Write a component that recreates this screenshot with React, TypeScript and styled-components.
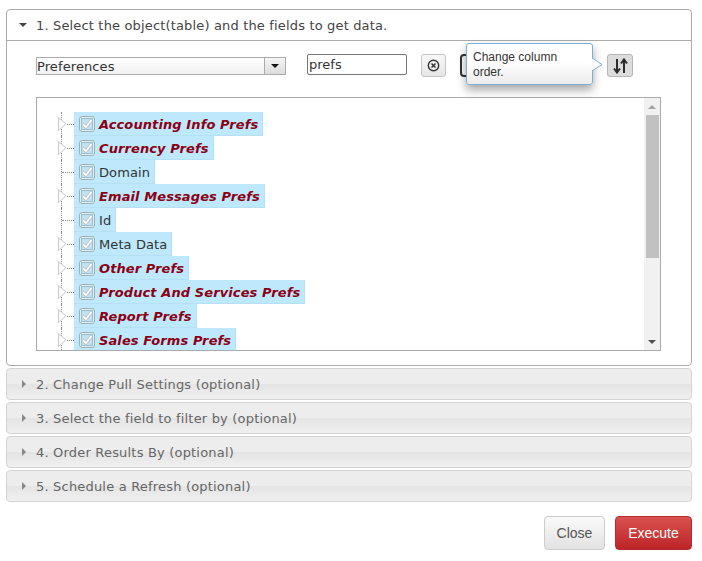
import styled, { createGlobalStyle } from 'styled-components';

const Global = createGlobalStyle`
  html, body { margin: 0; padding: 0; background: #fff; }
  body { font-family: "DejaVu Sans", Verdana, sans-serif; font-size: 13px; color: #333; }
  * { box-sizing: border-box; }
`;

const Page = styled.div`width: 702px; height: 561px; padding: 9px 10px 0 6px; display: flex; flex-direction: column; overflow: hidden;`;
const OpenPanel = styled.section`height: 357px; border: 1px solid #ababab; border-radius: 4px; display: flex; flex-direction: column;`;
const OpenHeader = styled.div`
  height: 31px; flex: none; border-bottom: 1px solid #ababab; display: flex; align-items: center;
  padding-left: 12px; gap: 9px; color: #444; font-size: 13px; letter-spacing: 0.16px;
`;
const Arrow = styled.span<{ $open?: boolean }>`
  width: 0; height: 0; flex: none;
  ${p => p.$open
    ? 'border-left: 4px solid transparent; border-right: 4px solid transparent; border-top: 4px solid #444;'
    : 'border-top: 4px solid transparent; border-bottom: 4px solid transparent; border-left: 4px solid #888; margin: 0 2px;'}
`;
const Body = styled.div`flex: 1; padding: 13px 30px 0 29px; min-height: 0;`;
const Toolbar = styled.div`position: relative; display: flex; align-items: flex-start; height: 43px;`;
const SelectBox = styled.div`
  margin-top: 3px; width: 250px; height: 18px; border: 1px solid #ababab; display: flex;
  background: linear-gradient(#fff, #f1f1f1); color: #333;
`;
const SelectText = styled.div`flex: 1; font-size: 13px; line-height: 17px; letter-spacing: 0.1px;`;
const SelectBtn = styled.div`
  width: 21px; border-left: 1px solid #ababab; background: linear-gradient(#f4f4f4, #dcdcdc);
  display: flex; align-items: center; justify-content: center;
`;
const BlackArrow = styled.span`width: 0; height: 0; border-left: 4px solid transparent; border-right: 4px solid transparent; border-top: 4px solid #111;`;
const FilterInput = styled.input`
  margin-left: 21px; width: 100px; height: 21px; border: 1px solid #767676; border-radius: 2px; padding: 0 0 0 1px;
  font: 13px "DejaVu Sans", sans-serif; color: #333; background: #fff; outline: none;
`;
const IconBtn = styled.button<{ $left: number; $wide: number; $pressed?: boolean }>`
  margin-left: ${p => p.$left}px; width: ${p => p.$wide}px; height: 23px; padding: 0; border: 1px solid ${p => (p.$pressed ? '#b5b5b5' : '#c4c4c4')}; border-radius: 3px;
  background: ${p => (p.$pressed ? '#dcdcdc' : 'linear-gradient(#f8f8f8, #e6e6e6)')};
  display: flex; align-items: center; justify-content: center; color: #333; flex: none;
`;
const HiddenBtn = styled.div`margin-left: 14px; width: 26px; height: 23px; border: 2px solid #333; border-radius: 4px; background: #fafafa; flex: none;`;
const Tip = styled.div`
  position: absolute; left: 430px; top: -11px; width: 127px; height: 42px; padding: 6px 6px 0;
  border: 1px solid #7aaed6; border-radius: 3px; background: linear-gradient(#fff 45%, #ececec);
  box-shadow: 0 5px 10px rgba(0, 0, 0, 0.35);
  font: 12px/15px "Liberation Sans", Arial, sans-serif; color: #333; z-index: 2;
`;
const TipTail = styled.svg`position: absolute; right: -11px; top: 14px;`;
const TreeBox = styled.div`width: 625px; height: 254px; border: 1px solid #ababab; display: flex; overflow: hidden; background: #fff;`;
const TreeList = styled.div`flex: 1; padding: 14px 0 0 16px; min-width: 0; overflow: hidden;`;
const Row = styled.div`display: flex; height: 24px; align-items: stretch;`;
const Gutter = styled.div`position: relative; width: 21px; flex: none;`;
const GuideV = styled.div`position: absolute; left: 8px; top: 0; bottom: 0; border-left: 1px dotted #888;`;
const GuideH = styled.div`position: absolute; left: 9px; right: 0; top: 12px; border-top: 1px dotted #888;`;
const Expander = styled.svg`position: absolute; left: 5px; top: 5px;`;
const Item = styled.div`
  display: flex; align-items: center; gap: 4px; padding: 1px 4px 0 5px; background: #bee9fd;
  border: 1px solid #b6e0f3; border-width: 0 1px 1px 0;
`;
const Check = styled.svg`flex: none;`;
const Label = styled.span<{ $bold?: boolean }>`
  font-size: 13px; white-space: nowrap; letter-spacing: 0.1px;
  ${p => (p.$bold ? 'font-weight: 700; font-style: italic; color: #8b0015;' : 'color: #333;')}
`;
const Scrollbar = styled.div`width: 16px; flex: none; background: #f1f1f1; display: flex; flex-direction: column; align-items: center;`;
const ScrollEnd = styled.div<{ $down?: boolean }>`
  height: 17px; flex: none; display: flex; align-items: center; justify-content: center;
  &::before {
    content: ''; width: 0; height: 0; border-left: 4px solid transparent; border-right: 4px solid transparent;
    ${p => (p.$down ? 'border-top: 4px solid #505050;' : 'border-bottom: 4px solid #a3a3a3;')}
  }
`;
const Thumb = styled.div`width: 13px; height: 143px; background: #c1c1c1; flex: none;`;
const ScrollGap = styled.div`flex: 1;`;
const Collapsed = styled.div`
  margin-top: 2px; height: 32px; flex: none; border: 1px solid #d3d3d3; border-radius: 4px;
  background: linear-gradient(#ededed 50%, #e4e4e4 50%, #f0f0f0);
  display: flex; align-items: center; padding-left: 13px; gap: 8px; color: #666; font-size: 13px; letter-spacing: 0.19px;
`;
const Footer = styled.div`margin-top: 14px; display: flex; justify-content: flex-end; gap: 10px;`;
const Button = styled.button<{ $primary?: boolean }>`
  height: 34px; border-radius: 4px; font: 14px "Liberation Sans", Arial, sans-serif; padding: 0;
  ${p => p.$primary
    ? 'width: 77px; border: 1px solid #b52a2e; color: #fff; background: linear-gradient(#d9534f, #bd2427);'
    : 'width: 61px; border: 1px solid #ccc; color: #555; background: linear-gradient(#fafafa, #e2e2e2);'}
`;

const fields = [
  { name: 'Accounting Info Prefs', bold: true, kids: true },
  { name: 'Currency Prefs', bold: true, kids: true },
  { name: 'Domain' },
  { name: 'Email Messages Prefs', bold: true, kids: true },
  { name: 'Id' },
  { name: 'Meta Data', kids: true },
  { name: 'Other Prefs', bold: true, kids: true },
  { name: 'Product And Services Prefs', bold: true, kids: true },
  { name: 'Report Prefs', bold: true, kids: true },
  { name: 'Sales Forms Prefs', bold: true, kids: true },
];
const steps = ['2. Change Pull Settings (optional)', '3. Select the field to filter by (optional)', '4. Order Results By (optional)', '5. Schedule a Refresh (optional)'];

export default function App() {
  return (
    <Page>
      <Global />
      <OpenPanel>
        <OpenHeader><Arrow $open />1. Select the object(table) and the fields to get data.</OpenHeader>
        <Body>
          <Toolbar>
            <SelectBox>
              <SelectText>Preferences</SelectText>
              <SelectBtn><BlackArrow /></SelectBtn>
            </SelectBox>
            <FilterInput defaultValue="prefs" />
            <IconBtn $left={14} $wide={25}>
              <svg width="13" height="13" viewBox="0 0 13 13" fill="none" stroke="#333">
                <circle cx="6.5" cy="6.5" r="5.2" strokeWidth="1.4" />
                <path d="M4.5 4.5l4 4M8.5 4.5l-4 4" strokeWidth="1.5" />
              </svg>
            </IconBtn>
            <HiddenBtn />
            <IconBtn $left={121} $wide={26} $pressed>
              <svg width="15" height="16" viewBox="0 0 15 16" fill="none" stroke="#2b2b2b" strokeWidth="2">
                <path d="M4 1v13M1 10.500L4 14.500l3-4M11 15V2M8 5.500L11 1.500l3 4" />
              </svg>
            </IconBtn>
            <Tip>
              Change column order.
              <TipTail width="11" height="14" viewBox="0 0 11 14">
                <path d="M0 0L10 6.500L0 13" fill="#fafafa" stroke="#7aaed6" />
              </TipTail>
            </Tip>
          </Toolbar>
          <TreeBox>
            <TreeList>
              {fields.map(f => (
                <Row key={f.name}>
                  <Gutter>
                    <GuideV />
                    <GuideH />
                    {f.kids && (
                      <Expander width="9" height="14" viewBox="0 0 9 14">
                        <path d="M0.500 0.500L8 7L0.500 13.500Z" fill="#fbfbfb" stroke="#c8c8c8" />
                      </Expander>
                    )}
                  </Gutter>
                  <Item>
                    <Check width="16" height="16" viewBox="0 0 16 16">
                      <rect x="0.500" y="0.500" width="15" height="15" rx="2.500" fill="#dfeef5" stroke="#9fb0b8" />
                      <rect x="2.500" y="2.500" width="11" height="11" fill="#c4e0ed" stroke="#9cc0d1" />
                      <path d="M4 8.500l3 2.500 5.500-7" fill="none" stroke="#a9b8be" strokeWidth="3" />
                      <path d="M4 8.500l3 2.500 5.500-7" fill="none" stroke="#fff" strokeWidth="2" />
                    </Check>
                    <Label $bold={f.bold}>{f.name}</Label>
                  </Item>
                </Row>
              ))}
            </TreeList>
            <Scrollbar>
              <ScrollEnd />
              <Thumb />
              <ScrollGap />
              <ScrollEnd $down />
            </Scrollbar>
          </TreeBox>
        </Body>
      </OpenPanel>
      {steps.map(s => (
        <Collapsed key={s}><Arrow />{s}</Collapsed>
      ))}
      <Footer>
        <Button>Close</Button>
        <Button $primary>Execute</Button>
      </Footer>
    </Page>
  );
}
